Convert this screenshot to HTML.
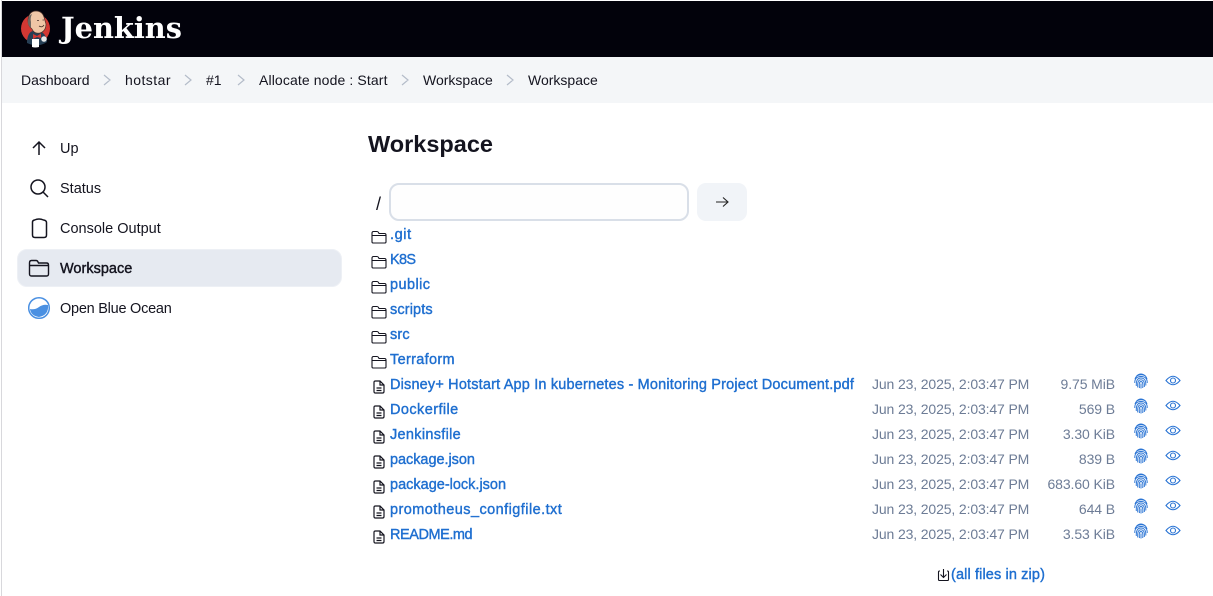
<!DOCTYPE html>
<html><head><meta charset="utf-8"><style>
html,body{margin:0;padding:0;width:1213px;height:596px;overflow:hidden;background:#fff;font-family:"Liberation Sans",sans-serif;font-size:14.5px;color:#14141f}
.a{position:absolute;white-space:nowrap}
.b{font-size:14px}
.l{color:#1f6fd0;-webkit-text-stroke:.4px #1f6fd0;letter-spacing:.12px}
.d,.s{color:#6d7c96;font-size:14px}
.d{left:872px;letter-spacing:-.13px}
.s{text-align:right;width:100px;left:1015px;letter-spacing:-.1px}
svg{position:absolute;fill:none;stroke:#14141f}
</style></head><body>
<svg width="0" height="0" style="position:absolute"><defs>
<symbol id="fo" viewBox="0 0 16 14"><path d="M1 12V3.2Q1 1.5 2.5 1.5H6Q7 1.5 7.5 2.5L8 3.5H13.5Q15 3.500 15 5V12Q15 13 13.5 13H2.5Q1 13 1 12ZM1 5.500H15" stroke-width="1.1"/></symbol>
<symbol id="fi" viewBox="0 0 12 14"><path d="M2.5 1H7L11 5V11.5Q11 13 9.5 13H2.5Q1 13 1 11.5V2.5Q1 1 2.5 1ZM7 1V5H11M3.5 8H8.500M3.5 10.5H8.500" stroke-width="1.2"/></symbol>
<symbol id="fp" viewBox="0 0 14 16"><path d="M2.500 3Q7-1 11.500 3M1 6Q2 2 7 1.800T13 6M.8 10Q.5 3.500 7 3.500T13.200 10M2.300 13Q1.800 5 7 5T11.800 12.500M3.800 14.500Q3 6.800 7 6.800T10.300 14M5.500 15Q4.600 8.500 7 8.500T8.700 15M7 10.500V15.500" stroke="#2a74d4" stroke-width=".95"/></symbol>
<symbol id="ey" viewBox="0 0 16 11"><path d="M1 5.5Q8-3 15 5.5Q8 14 1 5.5Z" stroke="#2a74d4" stroke-width="1.1"/><circle cx="8" cy="5.5" r="2.5" stroke="#2a74d4" stroke-width="1.1"/></symbol>
</defs></svg>

<div class="a" style="left:1px;top:0;width:1px;height:596px;background:#d8d8dc"></div>
<div class="a" style="left:2px;top:1px;width:1211px;height:56px;background:#02020b"></div>
<div class="a" style="left:2px;top:57px;width:1211px;height:46px;background:#f4f6f8"></div>

<svg style="left:20px;top:9px" width="32" height="40" viewBox="0 0 32 40">
<circle cx="15.500" cy="19.500" r="14.500" fill="#d33833" stroke="none"/>
<path d="M7 32Q8 23 13 22L22 23Q27 27 27 33Q18 39 7 34Z" fill="#263f55" stroke="none"/>
<path d="M8 11Q9 2 16 2Q23 2 24.500 10L26 15Q26 22 20 24Q14 25 12 20Q8 17 8 11Z" fill="#efc6a6" stroke="#49312a" stroke-width=".7"/>
<path d="M8 11Q7 16 11 19L11 13Q10 9 12 5Q9 6 8 11Z" fill="#6e6660" stroke="none"/>
<path d="M17 11.500H19M22.500 11H24M19 17Q22 19 24 16" stroke="#49312a" stroke-width=".8"/>
<path d="M13 25L17 27L21 24.500L21 29L17 28L13 30Z" fill="#d33833" stroke="none"/>
<path d="M12 30H19V38Q15 39 12 38Z" fill="#fff" stroke="none"/>
<circle cx="24" cy="30" r="2.800" fill="#e8e8e8" stroke="none"/>
</svg>
<div class="a" style="left:61px;top:10px;font:bold 28.800px 'DejaVu Serif',serif;color:#fff;line-height:36px">Jenkins</div>

<div class="a b" style="left:21px;top:72px">Dashboard</div>
<div class="a b" style="left:125px;top:72px;letter-spacing:.45px">hotstar</div>
<div class="a b" style="left:206px;top:72px">#1</div>
<div class="a b" style="left:259px;top:72px;letter-spacing:.12px">Allocate node : Start</div>
<div class="a b" style="left:423px;top:72px">Workspace</div>
<div class="a b" style="left:528px;top:72px">Workspace</div>
<svg style="left:0;top:70px" width="530" height="20"><path d="M104 5L110 10L104 15M185 5L191 10L185 15M238 5L244 10L238 15M402 5L408 10L402 15M507 5L513 10L507 15" stroke="#b4bcc9" stroke-width="1.200"/></svg>

<div class="a" style="left:17px;top:249px;width:323px;height:36px;background:#e6eaf1;border:1px solid #edf0f5;border-radius:10px"></div>
<svg style="left:28px;top:137px" width="24" height="185" viewBox="0 0 24 185">
<path d="M11 18V5M5 11L11 5L17 11" stroke-width="1.500"/>
<circle cx="10" cy="50" r="7" stroke-width="1.500"/><path d="M15 55L20 60" stroke-width="1.500"/>
<path d="M4.500 85Q4.500 83.500 6.500 83Q11 81 15.500 83Q18.500 83.500 18.500 85.500V98Q18.500 100.500 16 100.500H7Q4.500 100.500 4.500 98Z" stroke-width="1.500"/>
<path d="M1.500 137V126Q1.500 123.500 3.500 123.500H8Q9.500 123.500 10 125L10.500 126H18.500Q20.500 126 20.500 128V137Q20.500 139 18.500 139H3.500Q1.500 139 1.500 137ZM1.500 128.500H20.500" stroke-width="1.400"/>
<circle cx="11" cy="171" r="10.300" fill="#fff" stroke="#4a90e2" stroke-width="1.500"/>
<path d="M2 172Q7 173 11 170T20 168Q21 178 11 180Q3 179 2 172Z" fill="#4a90e2" stroke="none"/>
</svg>
<div class="a" style="left:60px;top:141px">Up</div>
<div class="a" style="left:60px;top:181px">Status</div>
<div class="a" style="left:60px;top:221px">Console Output</div>
<div class="a" style="left:60px;top:261px;-webkit-text-stroke:.4px #14141f">Workspace</div>
<div class="a" style="left:60px;top:301px;letter-spacing:-.25px">Open Blue Ocean</div>

<div class="a" style="left:368px;top:130px;font-size:23.500px;font-weight:bold;line-height:29px">Workspace</div>
<div class="a" style="left:376px;top:194px;font-size:18px">/</div>
<div class="a" style="left:389px;top:183px;width:296px;height:34px;border:2px solid #d9dfe8;border-radius:10px;background:#fefefe"></div>
<div class="a" style="left:697px;top:183px;width:50px;height:38px;border-radius:9px;background:#f1f4f8"></div>
<svg style="left:714px;top:195px" width="16" height="14"><path d="M2 7H14M9 2.500L14 7L9 11.500" stroke="#222" stroke-width="1.100"/></svg>

<svg style="left:371px;top:230px" width="16" height="14"><use href="#fo"/></svg><div class="a l" style="left:390px;top:227px;letter-spacing:.6px">.git</div>
<svg style="left:371px;top:255px" width="16" height="14"><use href="#fo"/></svg><div class="a l" style="left:390px;top:252px;letter-spacing:-.7px">K8S</div>
<svg style="left:371px;top:280px" width="16" height="14"><use href="#fo"/></svg><div class="a l" style="left:390px;top:277px;letter-spacing:.42px">public</div>
<svg style="left:371px;top:305px" width="16" height="14"><use href="#fo"/></svg><div class="a l" style="left:390px;top:302px">scripts</div>
<svg style="left:371px;top:330px" width="16" height="14"><use href="#fo"/></svg><div class="a l" style="left:390px;top:327px">src</div>
<svg style="left:371px;top:355px" width="16" height="14"><use href="#fo"/></svg><div class="a l" style="left:390px;top:352px;letter-spacing:.32px">Terraform</div>

<svg style="left:373px;top:380px" width="12" height="14"><use href="#fi"/></svg><div class="a l" style="left:390px;top:377px;letter-spacing:.17px">Disney+ Hotstart App In kubernetes - Monitoring Project Document.pdf</div><div class="a d" style="top:376px">Jun 23, 2025, 2:03:47 PM</div><div class="a s" style="top:376px">9.75 MiB</div><svg style="left:1134px;top:373px" width="14" height="16"><use href="#fp"/></svg><svg style="left:1165px;top:375px" width="16" height="11"><use href="#ey"/></svg>
<svg style="left:373px;top:405px" width="12" height="14"><use href="#fi"/></svg><div class="a l" style="left:390px;top:402px;letter-spacing:.42px">Dockerfile</div><div class="a d" style="top:401px">Jun 23, 2025, 2:03:47 PM</div><div class="a s" style="top:401px">569 B</div><svg style="left:1134px;top:398px" width="14" height="16"><use href="#fp"/></svg><svg style="left:1165px;top:400px" width="16" height="11"><use href="#ey"/></svg>
<svg style="left:373px;top:430px" width="12" height="14"><use href="#fi"/></svg><div class="a l" style="left:390px;top:427px;letter-spacing:.3px">Jenkinsfile</div><div class="a d" style="top:426px">Jun 23, 2025, 2:03:47 PM</div><div class="a s" style="top:426px">3.30 KiB</div><svg style="left:1134px;top:423px" width="14" height="16"><use href="#fp"/></svg><svg style="left:1165px;top:425px" width="16" height="11"><use href="#ey"/></svg>
<svg style="left:373px;top:455px" width="12" height="14"><use href="#fi"/></svg><div class="a l" style="left:390px;top:452px;letter-spacing:-.05px">package.json</div><div class="a d" style="top:451px">Jun 23, 2025, 2:03:47 PM</div><div class="a s" style="top:451px">839 B</div><svg style="left:1134px;top:448px" width="14" height="16"><use href="#fp"/></svg><svg style="left:1165px;top:450px" width="16" height="11"><use href="#ey"/></svg>
<svg style="left:373px;top:480px" width="12" height="14"><use href="#fi"/></svg><div class="a l" style="left:390px;top:477px;letter-spacing:0">package-lock.json</div><div class="a d" style="top:476px">Jun 23, 2025, 2:03:47 PM</div><div class="a s" style="top:476px">683.60 KiB</div><svg style="left:1134px;top:473px" width="14" height="16"><use href="#fp"/></svg><svg style="left:1165px;top:475px" width="16" height="11"><use href="#ey"/></svg>
<svg style="left:373px;top:505px" width="12" height="14"><use href="#fi"/></svg><div class="a l" style="left:390px;top:502px;letter-spacing:.44px">promotheus_configfile.txt</div><div class="a d" style="top:501px">Jun 23, 2025, 2:03:47 PM</div><div class="a s" style="top:501px">644 B</div><svg style="left:1134px;top:498px" width="14" height="16"><use href="#fp"/></svg><svg style="left:1165px;top:500px" width="16" height="11"><use href="#ey"/></svg>
<svg style="left:373px;top:530px" width="12" height="14"><use href="#fi"/></svg><div class="a l" style="left:390px;top:527px;letter-spacing:-.45px">README.md</div><div class="a d" style="top:526px">Jun 23, 2025, 2:03:47 PM</div><div class="a s" style="top:526px">3.53 KiB</div><svg style="left:1134px;top:523px" width="14" height="16"><use href="#fp"/></svg><svg style="left:1165px;top:525px" width="16" height="11"><use href="#ey"/></svg>

<svg style="left:937px;top:568px" width="13" height="14"><path d="M3 3H2.500Q1.500 3 1.500 4V11.500Q1.500 12.500 2.500 12.500H10.500Q11.500 12.500 11.500 11.500V4Q11.500 3 10.500 3H10M6.500 1V9M3.500 6.500L6.500 9.500L9.500 6.500" stroke-width="1.100"/></svg>
<div class="a l" style="left:951px;top:567px">(all files in zip)</div>
</body></html>
